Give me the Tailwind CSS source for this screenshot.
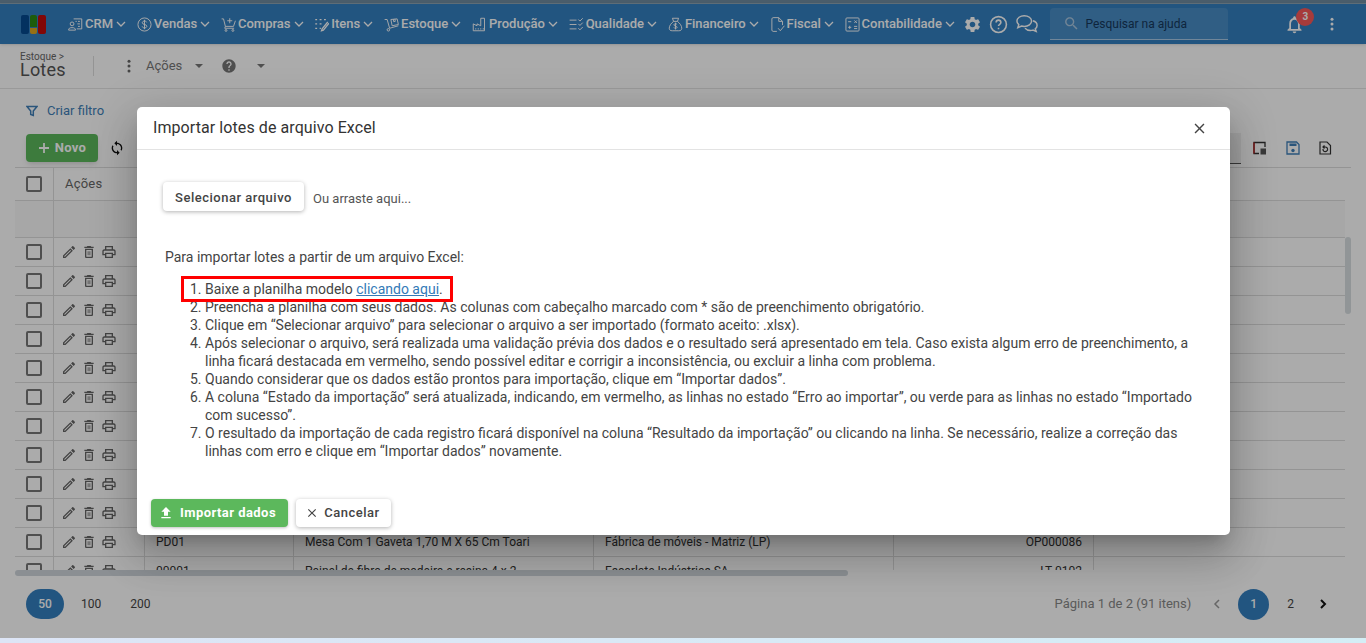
<!DOCTYPE html>
<html lang="pt-BR">
<head>
  <meta charset="UTF-8" />
  <meta name="viewport" content="width=device-width, initial-scale=1.0"/>
  <title>Lotes</title>
  <script src="https://cdn.jsdelivr.net/npm/@tailwindcss/browser@4"></script>
</head>
<body class="bg-white font-[Roboto,sans-serif] text-[#444]">
<div class="relative flex h-[643px] w-[1366px] flex-col overflow-hidden">

  <!-- faixa superior -->
  <div class="h-[4px] bg-[#6f8ba0] border-b border-[#8fa6b5]"></div>

  <!-- menu principal -->
  <header class="flex h-[40px] items-center bg-[#347fbf] text-[13px] font-medium text-white shadow-sm">
    <div class="ml-[21px] flex h-[19px] w-[25px] gap-[1px]">
      <div class="w-[8px] rounded-[2px] bg-[#05498f]"></div>
      <div class="flex w-[8px] flex-col gap-[1px]">
        <div class="h-[12px] rounded-t-[2px] bg-[#2c8a13]"></div>
        <div class="h-[6px] rounded-b-[2px] bg-[#e0a81f]"></div>
      </div>
      <div class="w-[8px] rounded-[2px] bg-[#c00b0b]"></div>
    </div>

    <nav class="ml-[22px] flex items-center gap-[10.800px]">
      <a class="flex items-center gap-[2px]">
        <svg class="size-[15px]" viewBox="0 0 24 24" fill="none" stroke="currentColor" stroke-width="1.5"><circle cx="6.5" cy="11" r="3"/><path d="M1 21c0-3 2-4 5.500-4s5.500 1 5.500 4zM9 3h13v16h-8M12 7h2M16 7h3M15 11h4M16 15h3"/></svg>
        <span>CRM</span>
        <svg class="ml-[1px] size-[10px]" viewBox="0 0 10 10" fill="none" stroke="currentColor" stroke-width="1.300"><path d="M1 3l4 4 4-4"/></svg>
      </a>
      <a class="flex items-center gap-[2px]">
        <svg class="size-[15px]" viewBox="0 0 24 24" fill="none" stroke="currentColor" stroke-width="1.500"><circle cx="12" cy="12" r="10.500"/><path d="M15.500 8.500c-.5-1.500-2-2-3.500-2-2 0-3.500 1-3.500 2.700 0 3.600 7.200 2 7.200 5.600 0 1.700-1.700 2.700-3.700 2.700-1.700 0-3.200-.7-3.700-2.300M12 4.500v15"/></svg>
        <span>Vendas</span>
        <svg class="ml-[1px] size-[10px]" viewBox="0 0 10 10" fill="none" stroke="currentColor" stroke-width="1.300"><path d="M1 3l4 4 4-4"/></svg>
      </a>
      <a class="flex items-center gap-[2px]">
        <svg class="size-[15px]" viewBox="0 0 24 24" fill="none" stroke="currentColor" stroke-width="1.500"><path d="M1 3h3l3 12h13l3-9M14 2v8M10 6h8M7 15l-1 3h15"/><circle cx="8" cy="21.500" r="1.500"/><circle cx="19" cy="21.500" r="1.500"/></svg>
        <span>Compras</span>
        <svg class="ml-[1px] size-[10px]" viewBox="0 0 10 10" fill="none" stroke="currentColor" stroke-width="1.300"><path d="M1 3l4 4 4-4"/></svg>
      </a>
      <a class="flex items-center gap-[2px]">
        <svg class="size-[15px]" viewBox="0 0 24 24" fill="none" stroke="currentColor" stroke-width="2"><path d="M2 4h3M9 4h3M16 4h3M2 11h3M9 11h3M2 18h3M9 18h2M22 8L13 19l-1 3 3-1L24 10"/></svg>
        <span>Itens</span>
        <svg class="ml-[1px] size-[10px]" viewBox="0 0 10 10" fill="none" stroke="currentColor" stroke-width="1.300"><path d="M1 3l4 4 4-4"/></svg>
      </a>
      <a class="flex items-center gap-[2px]">
        <svg class="size-[15px]" viewBox="0 0 24 24" fill="none" stroke="currentColor" stroke-width="1.500"><path d="M1 4h4l4 14 14-4M11 4l10-1 2 9-10 2zM15 3.500l.5 4 2.500-.5-.5-4"/><circle cx="7" cy="20.500" r="2"/></svg>
        <span>Estoque</span>
        <svg class="ml-[1px] size-[10px]" viewBox="0 0 10 10" fill="none" stroke="currentColor" stroke-width="1.300"><path d="M1 3l4 4 4-4"/></svg>
      </a>
      <a class="flex items-center gap-[2px]">
        <svg class="size-[15px]" viewBox="0 0 24 24" fill="none" stroke="currentColor" stroke-width="1.500"><path d="M2 22V11l6 3v-3l6 3V2h6v20zM6 18v2M10 18v2M14 18v2M18 18v2"/></svg>
        <span>Produção</span>
        <svg class="ml-[1px] size-[10px]" viewBox="0 0 10 10" fill="none" stroke="currentColor" stroke-width="1.300"><path d="M1 3l4 4 4-4"/></svg>
      </a>
      <a class="flex items-center gap-[2px]">
        <svg class="size-[15px]" viewBox="0 0 24 24" fill="none" stroke="currentColor" stroke-width="1.500"><path d="M1 5h11M1 12h11M1 19h11M15 4l2.500 2.500L22 2M15 11l2.500 2.500L22 9M15 18l2.500 2.500L22 16"/></svg>
        <span>Qualidade</span>
        <svg class="ml-[1px] size-[10px]" viewBox="0 0 10 10" fill="none" stroke="currentColor" stroke-width="1.300"><path d="M1 3l4 4 4-4"/></svg>
      </a>
      <a class="flex items-center gap-[2px]">
        <svg class="size-[15px]" viewBox="0 0 24 24" fill="none" stroke="currentColor" stroke-width="1.500"><path d="M9 7L7 2h10l-2 5zM9 7c-4 3-7 7-7 11 0 3 2 4 5 4h10c3 0 5-1 5-4 0-4-3-8-7-11M14.500 12c-.5-1-1.500-1.200-2.500-1.200-1.500 0-2.500.7-2.500 1.800 0 2.500 5 1.200 5 3.800 0 1.100-1 1.800-2.500 1.800-1.200 0-2.200-.5-2.600-1.500M12 9v11"/></svg>
        <span>Financeiro</span>
        <svg class="ml-[1px] size-[10px]" viewBox="0 0 10 10" fill="none" stroke="currentColor" stroke-width="1.300"><path d="M1 3l4 4 4-4"/></svg>
      </a>
      <a class="flex items-center gap-[2px]">
        <svg class="size-[15px]" viewBox="0 0 24 24" fill="none" stroke="currentColor" stroke-width="1.500"><path d="M11 23H5c-1 0-2-1-2-2V3c0-1 1-2 2-2h9l6 6v6M14 1v6h6M13 18l3.500 4L23 14"/></svg>
        <span>Fiscal</span>
        <svg class="ml-[1px] size-[10px]" viewBox="0 0 10 10" fill="none" stroke="currentColor" stroke-width="1.300"><path d="M1 3l4 4 4-4"/></svg>
      </a>
      <a class="flex items-center gap-[2px]">
        <svg class="size-[15px]" viewBox="0 0 24 24" fill="none" stroke="currentColor" stroke-width="1.500"><rect x="1.500" y="1.500" width="21" height="21" rx="1.500"/><path d="M5 7.500h5M15 5.500l4 4M19 5.500l-4 4M7.500 14v5M5 16.500h5M14.500 15h5M14.500 18.500h5"/></svg>
        <span>Contabilidade</span>
        <svg class="ml-[1px] size-[10px]" viewBox="0 0 10 10" fill="none" stroke="currentColor" stroke-width="1.300"><path d="M1 3l4 4 4-4"/></svg>
      </a>
    </nav>

    <div class="ml-[8px] flex items-center gap-[7.500px]">
      <svg class="size-[19px]" viewBox="0 0 24 24" fill="currentColor"><path d="M19.140 12.940c.04-.3.06-.61.06-.94 0-.32-.02-.64-.07-.94l2.030-1.580c.18-.14.23-.41.12-.61l-1.920-3.320c-.12-.22-.37-.29-.59-.22l-2.390.96c-.5-.38-1.030-.7-1.620-.94l-.36-2.540c-.04-.24-.24-.41-.48-.41h-3.840c-.24 0-.43.17-.47.41l-.36 2.540c-.59.24-1.130.57-1.620.94l-2.390-.96c-.22-.08-.47 0-.59.22L2.740 8.870c-.12.21-.08.47.12.61l2.030 1.580c-.05.3-.09.63-.09.94s.02.64.07.94l-2.030 1.580c-.18.14-.23.41-.12.61l1.920 3.320c.12.22.37.29.59.22l2.390-.96c.5.38 1.030.7 1.620.94l.36 2.540c.05.24.24.41.48.41h3.840c.24 0 .44-.17.47-.41l.36-2.540c.59-.24 1.130-.56 1.620-.94l2.390.96c.22.08.47 0 .59-.22l1.920-3.320c.12-.22.07-.47-.12-.61l-2.010-1.580zM12 15.600c-1.980 0-3.600-1.620-3.600-3.600s1.620-3.600 3.600-3.600 3.600 1.620 3.600 3.600-1.620 3.600-3.600 3.600z"/></svg>
      <svg class="size-[19px]" viewBox="0 0 24 24" fill="none" stroke="currentColor" stroke-width="2"><circle cx="12" cy="12" r="10"/><path d="M9 9.500c0-1.700 1.300-3 3-3s3 1.300 3 3c0 2.300-3 2.200-3 4.500M12 16v2"/></svg>
      <svg class="size-[22px]" viewBox="0 0 24 24" fill="none" stroke="currentColor" stroke-width="1.600"><path d="M9 3c-4.400 0-8 2.500-8 5.800 0 1.500.8 2.900 2 3.900L2 16l4-1.800c1 .3 2 .5 3 .5 4.400 0 8-2.600 8-5.900S13.400 3 9 3z"/><path d="M18.500 8.500c2.700.8 4.500 2.800 4.500 5 0 1.500-.7 2.700-2 3.700l1 3-3.500-1.500c-1 .3-1.800.4-2.700.4-2.500 0-4.800-1-6-2.600"/></svg>
    </div>

    <div class="ml-[12.500px] flex h-[32px] w-[178px] items-center rounded-t-[4px] border-b border-[#a8c8e4] bg-white/10 pl-[13px] text-[12px] font-normal text-[#16385c]">
      <svg class="mr-[5px] size-[17px] text-[#a9c6df]" viewBox="0 0 24 24" fill="currentColor"><path d="M15.500 14h-.79l-.28-.27C15.410 12.590 16 11.110 16 9.500 16 5.910 13.090 3 9.500 3S3 5.910 3 9.500 5.910 16 9.500 16c1.610 0 3.090-.59 4.230-1.570l.27.28v.79l5 4.990L20.490 19l-4.990-5zm-6 0C7.010 14 5 11.990 5 9.500S7.010 5 9.500 5 14 7.010 14 9.500 11.990 14 9.500 14z"/></svg>
      <span>Pesquisar na ajuda</span>
    </div>

    <div class="relative ml-[55.500px]">
      <svg class="size-[21px]" viewBox="0 0 24 24" fill="currentColor"><path d="M12 22c1.100 0 2-.9 2-2h-4c0 1.100.9 2 2 2zm6-6v-5c0-3.070-1.630-5.640-4.500-6.320V4c0-.83-.67-1.500-1.500-1.500s-1.500.67-1.500 1.500v.68C7.640 5.360 6 7.920 6 11v5l-2 2v1h16v-1l-2-2zm-2 1H8v-6c0-2.480 1.510-4.500 4-4.500s4 2.020 4 4.500v6z"/></svg>
      <span class="absolute left-[12.500px] top-[-6px] flex size-[18px] items-center justify-center rounded-full bg-[#f85858] text-[10px] font-bold">3</span>
    </div>
    <svg class="ml-[18.500px] size-[18px]" viewBox="0 0 24 24" fill="currentColor"><circle cx="12" cy="5.500" r="2"/><circle cx="12" cy="12" r="2"/><circle cx="12" cy="18.500" r="2"/></svg>
  </header>

  <!-- cabeçalho da página -->
  <div class="flex h-[45px] items-center border-b border-[#e4e4e4] pl-[20px]">
    <div class="w-[73px] pb-[3px] leading-none">
      <div class="text-[10px] leading-[10px] text-[#666]">Estoque &gt;</div>
      <div class="text-[18px] leading-[16px] tracking-[0.2px] text-[#555]">Lotes</div>
    </div>
    <div class="h-[20px] w-px bg-[#ddd]"></div>
    <svg class="ml-[26px] size-[18px] text-[#666]" viewBox="0 0 24 24" fill="currentColor"><circle cx="12" cy="5.500" r="2"/><circle cx="12" cy="12" r="2"/><circle cx="12" cy="18.500" r="2"/></svg>
    <span class="ml-[8px] text-[13px] text-[#777]">Ações</span>
    <svg class="ml-[13px] size-[8px] text-[#777]" viewBox="0 0 8 8" fill="currentColor"><path d="M0 2h8L4 6z"/></svg>
    <svg class="ml-[17.500px] size-[16px] text-[#777]" viewBox="0 0 24 24" fill="currentColor"><path d="M12 2C6.480 2 2 6.480 2 12s4.480 10 10 10 10-4.480 10-10S17.520 2 12 2zm1 17h-2v-2h2v2zm2.070-7.750l-.9.92C13.450 12.900 13 13.500 13 15h-2v-.5c0-1.100.45-2.100 1.170-2.830l1.240-1.260c.37-.36.59-.86.59-1.410 0-1.100-.9-2-2-2s-2 .9-2 2H8c0-2.210 1.790-4 4-4s4 1.790 4 4c0 .88-.36 1.680-.93 2.250z"/></svg>
    <svg class="ml-[20.500px] size-[8px] text-[#777]" viewBox="0 0 8 8" fill="currentColor"><path d="M0 2h8L4 6z"/></svg>
  </div>

  <!-- filtro -->
  <div class="flex h-[43px] items-center pl-[26px] text-[13px] text-[#3f7fb8]">
    <svg class="size-[12px]" viewBox="0 0 12 12" fill="none" stroke="currentColor" stroke-width="1.500"><path d="M1 1.500h10L7.300 6v4.500l-2.600-1V6z"/></svg>
    <span class="ml-[9px]">Criar filtro</span>
  </div>

  <!-- barra de ferramentas -->
  <div class="relative flex h-[35px] items-center pb-[3px] pl-[26px]">
    <button class="flex h-[28px] w-[72px] items-center justify-center gap-[5px] rounded-[4px] bg-[#5cb85c] text-[13px] font-bold tracking-[0.3px] text-white shadow-md">
      <svg class="size-[12px]" viewBox="0 0 12 12" fill="none" stroke="currentColor" stroke-width="1.800"><path d="M6 1v10M1 6h10"/></svg>
      Novo
    </button>
    <svg class="ml-[11px] size-[16px] text-[#111]" viewBox="0 0 24 24" fill="currentColor"><path d="M12 4V1L8 5l4 4V6c3.310 0 6 2.690 6 6 0 1.010-.25 1.970-.7 2.800l1.460 1.460C19.540 15.030 20 13.570 20 12c0-4.420-3.580-8-8-8zm0 14c-3.310 0-6-2.690-6-6 0-1.010.25-1.970.7-2.800L5.240 7.740C4.460 8.970 4 10.430 4 12c0 4.420 3.580 8 8 8v3l4-4-4-4v3z"/></svg>
    <div class="ml-auto mr-[34px] flex items-center gap-[18.500px]">
      <svg class="size-[14px]" viewBox="0 0 14 14" fill="none" stroke-width="1.300"><path d="M6 12.500H1V1.500h11V6" stroke="#333"/><path d="M1 12.500V1.500" stroke="#c62020"/><rect x="7.500" y="7.500" width="5.500" height="6" fill="#555"/></svg>
      <svg class="size-[14px] text-[#3f7fb8]" viewBox="0 0 14 14" fill="none" stroke="currentColor" stroke-width="1.300"><path d="M1 1h9.500L13 3.500V13H1z"/><rect x="3.500" y="2.500" width="7" height="2.500" fill="currentColor" stroke="none"/><circle cx="7" cy="9.500" r="1.700" fill="currentColor" stroke="none"/></svg>
      <svg class="size-[14px]" viewBox="0 0 14 14" fill="none" stroke="#333" stroke-width="1.200"><path d="M2 1h7l3.500 3.500V13H2z"/><path d="M5 8a2.300 2.300 0 1 0 2-2H5.500M6.500 4.500L5 6l1.500 1.500"/></svg>
    </div>
    <div class="absolute bottom-[3px] right-[125px] h-[31px] w-[30px] border-b border-[#555] bg-[#f0f0f0]"></div>
  </div>

  <!-- tabela -->
  <div class="relative ml-[15px] w-[1336px] border-t border-[#ddd]">
    <div id="lotes" class="h-[402px] w-[1330px] overflow-hidden text-[12px] text-[#333]">
      <div class="grid h-[33px] grid-cols-[39px_91px_149px_300px_300px_200px_1fr] border-b border-[#ddd]">
        <div class="flex items-center justify-center border-r border-[#ddd]">
          <span class="block size-[16px] rounded-[2px] border-2 border-[#777]"></span>
        </div>
        <div class="flex items-center pl-[11px] text-[13px] tracking-[0.2px] text-[#666]">Ações</div>
      </div>
      <div class="grid h-[37px] grid-cols-[39px_1fr] border-b border-[#ddd] bg-[#fafafa]">
        <div class="border-r border-[#ddd]"></div>
      </div>
    </div>
    <div class="h-[6px] w-[833px] rounded-[3px] bg-[#cfd6dc]"></div>
    <div class="absolute right-0 top-[69px] h-[77px] w-[6px] rounded-[3px] bg-[#d8dee2]"></div>
  </div>

  <!-- paginação -->
  <div class="flex h-[62px] items-center pb-[6px] pl-[26px] pr-[37px] text-[12px] text-[#444]">
    <span class="flex h-[30px] w-[38px] items-center justify-center rounded-full bg-[#347fbf] font-medium text-white">50</span>
    <span class="ml-[17px]">100</span>
    <span class="ml-[29px]">200</span>
    <span class="ml-auto text-[13px] text-[#888]">Página 1 de 2 (91 itens)</span>
    <svg class="ml-[20px] size-[12px] text-[#999]" viewBox="0 0 12 12" fill="none" stroke="currentColor" stroke-width="1.500"><path d="M8 2L4 6l4 4"/></svg>
    <span class="ml-[15px] flex size-[31px] items-center justify-center rounded-full bg-[#347fbf] font-medium text-white">1</span>
    <span class="ml-[18px]">2</span>
    <svg class="ml-[23px] size-[12px] text-[#111]" viewBox="0 0 12 12" fill="none" stroke="currentColor" stroke-width="2"><path d="M4 2l4 4-4 4"/></svg>
  </div>

  <!-- fundo escurecido e janela de importação -->
  <div class="absolute inset-x-0 top-0 h-[638px] bg-black/33"></div>
  <div class="absolute left-[137px] top-[107px] flex h-[428px] w-[1093px] flex-col rounded-[5px] bg-white text-[14px] text-[#444] shadow-[0_11px_15px_-7px_rgba(0,0,0,.2),0_24px_38px_3px_rgba(0,0,0,.14),0_9px_46px_8px_rgba(0,0,0,.12)]">
    <div class="flex h-[43px] shrink-0 items-center justify-between border-b border-[#e3e3e3] pl-[16px] pr-[22px]">
      <h2 class="text-[16px] tracking-[0.08px] text-[#333]">Importar lotes de arquivo Excel</h2>
      <svg class="size-[17px] text-[#444]" viewBox="0 0 24 24" fill="currentColor"><path d="M19 6.410L17.590 5 12 10.590 6.410 5 5 6.410 10.590 12 5 17.590 6.410 19 12 13.410 17.590 19 19 17.590 13.410 12z"/></svg>
    </div>

    <div class="px-[26px] pt-[32px]">
      <div class="flex items-center">
        <button class="h-[29px] w-[141px] rounded-[4px] bg-white pt-[2px] text-[13px] font-medium tracking-[0.5px] text-[#444] shadow-[0_1px_4px_rgba(0,0,0,.3)]">Selecionar arquivo</button>
        <span class="ml-[9px] pt-[4px] text-[13px] text-[#555]">Ou arraste aqui...</span>
      </div>
      <p class="ml-[2px] mt-[37px] leading-[18px]">Para importar lotes a partir de um arquivo Excel:</p>
      <ol class="ml-[2px] mt-[14px] list-decimal pl-[40px] pr-[10px] leading-[18px]">
        <li>Baixe a planilha modelo <a class="text-[#337ab7] underline">clicando aqui</a>.</li>
        <li>Preencha a planilha com seus dados. As colunas com cabeçalho marcado com * são de preenchimento obrigatório.</li>
        <li>Clique em “Selecionar arquivo” para selecionar o arquivo a ser importado (formato aceito: .xlsx).</li>
        <li>Após selecionar o arquivo, será realizada uma validação prévia dos dados e o resultado será apresentado em tela. Caso exista algum erro de preenchimento, a linha ficará destacada em vermelho, sendo possível editar e corrigir a inconsistência, ou excluir a linha com problema.</li>
        <li>Quando considerar que os dados estão prontos para importação, clique em “Importar dados”.</li>
        <li>A coluna “Estado da importação” será atualizada, indicando, em vermelho, as linhas no estado “Erro ao importar”, ou verde para as linhas no estado “Importado com sucesso”.</li>
        <li>O resultado da importação de cada registro ficará disponível na coluna “Resultado da importação” ou clicando na linha. Se necessário, realize a correção das linhas com erro e clique em “Importar dados” novamente.</li>
      </ol>
    </div>

    <div class="mt-auto flex gap-[8px] pb-[8px] pl-[14px]">
      <button class="flex h-[28px] w-[137px] items-center justify-center gap-[6px] rounded-[4px] bg-[#5cb85c] pr-[5px] text-[13px] font-bold tracking-[0.45px] text-white shadow-[0_1px_3px_rgba(0,0,0,.25)]">
        <svg class="size-[16px]" viewBox="0 0 24 24" fill="currentColor"><path d="M9 16h6v-6h4l-7-7-7 7h4zm-4 2h14v2H5z"/></svg>
        Importar dados
      </button>
      <button class="flex h-[28px] w-[95px] items-center justify-center gap-[5px] rounded-[4px] bg-white pr-[2px] text-[13px] font-medium tracking-[0.5px] text-[#444] shadow-[0_1px_4px_rgba(0,0,0,.3)]">
        <svg class="size-[14px]" viewBox="0 0 24 24" fill="currentColor"><path d="M19 6.410L17.590 5 12 10.590 6.410 5 5 6.410 10.590 12 5 17.590 6.410 19 12 13.410 17.590 19 19 17.590 13.410 12z"/></svg>
        Cancelar
      </button>
    </div>

    <!-- destaque vermelho -->
    <div class="absolute left-[44px] top-[169px] h-[26px] w-[272px] border-[3px] border-[#f00]"></div>
  </div>

  <!-- faixa inferior -->
  <div class="absolute inset-x-0 bottom-0 h-[5px] bg-gradient-to-r from-[#dde5f6] to-[#d4eef6]"></div>
</div>

<script>
  const rowIcons = `
    <svg class="size-[16px] text-[#666]" viewBox="0 0 24 24" fill="currentColor"><path d="M14.060 9.020l.92.92L5.920 19H5v-.92l9.060-9.060M17.660 3c-.25 0-.51.1-.7.29l-1.830 1.830 3.750 3.750 1.830-1.830c.39-.39.39-1.020 0-1.410l-2.340-2.340c-.2-.2-.45-.29-.71-.29zm-3.600 3.190L3 17.250V21h3.750L17.810 9.940l-3.750-3.750z"/></svg>
    <svg class="size-[16px] text-[#666]" viewBox="0 0 24 24" fill="currentColor"><path d="M6 19c0 1.100.9 2 2 2h8c1.100 0 2-.9 2-2V7H6v12zM8 9h8v10H8V9zm7.500-5l-1-1h-5l-1 1H5v2h14V4zM10 11h1.300v6H10zM12.700 11H14v6h-1.300z"/></svg>
    <svg class="size-[16px] text-[#666]" viewBox="0 0 24 24" fill="currentColor"><path d="M19 8h-1V3H6v5H5c-1.660 0-3 1.340-3 3v6h4v4h12v-4h4v-6c0-1.660-1.340-3-3-3zM8 5h8v3H8V5zm8 12v2H8v-4h8v2zm2-2v-2H6v2H4v-4c0-.55.45-1 1-1h14c.55 0 1 .45 1 1v4h-2z"/></svg>`;

  // linhas visíveis da tabela; as de cima ficam atrás da janela
  const rows = [
    ...Array(10).fill(['', '', '', '']),
    ['PD01', 'Mesa Com 1 Gaveta 1,70 M X 65 Cm Toari', 'Fábrica de móveis - Matriz (LP)', 'OP000086'],
    ['00001', 'Painel de fibra de madeira e resina 4 x 2', 'Escarlate Indústrias SA', 'LT 0102'],
  ];

  const table = document.getElementById('lotes');
  rows.forEach(([code, desc, company, batch]) => {
    const row = document.createElement('div');
    row.className = 'grid h-[29px] grid-cols-[39px_91px_149px_300px_300px_200px_1fr] border-b border-[#ddd]';
    row.innerHTML = `
      <div class="flex items-center justify-center border-r border-[#ddd]"><span class="block size-[16px] rounded-[2px] border-2 border-[#777]"></span></div>
      <div class="flex items-center gap-[4px] border-r border-[#ddd] pl-[7px]">${rowIcons}</div>
      <div class="flex items-center border-r border-[#ddd] pl-[11px]">${code}</div>
      <div class="flex items-center border-r border-[#ddd] pl-[11px]">${desc}</div>
      <div class="flex items-center border-r border-[#ddd] pl-[11px]">${company}</div>
      <div class="flex items-center justify-end border-r border-[#ddd] pr-[11px]">${batch}</div>
      <div></div>`;
    table.appendChild(row);
  });
</script>
</body>
</html>
